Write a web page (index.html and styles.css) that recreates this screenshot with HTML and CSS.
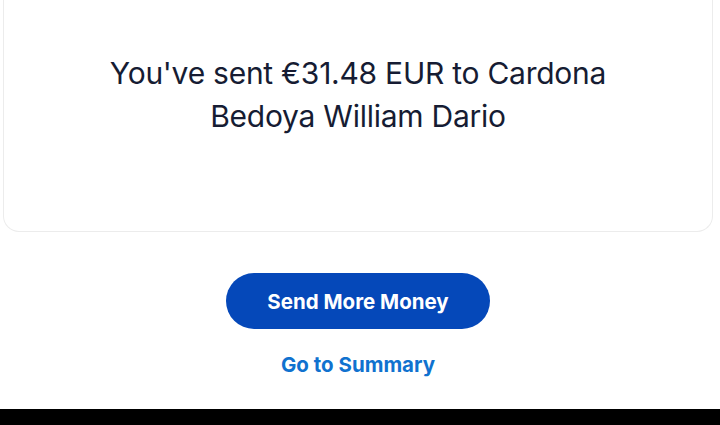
FILE: index.html
```html
<!DOCTYPE html>
<html lang="en">
<head>
    <meta charset="UTF-8">
    <meta name="viewport" content="width=device-width, initial-scale=1.0">
    <title>Payment sent</title>
    <link rel="stylesheet" href="styles.css">
</head>
<body>
    <div class="page">
        <div class="card">
            <h2 class="sent-msg">You've sent €31.48 EUR to Cardona Bedoya William Dario</h2>
        </div>
        <div class="actions">
            <a class="btn-primary" href="#">Send More Money</a>
            <a class="link" href="#">Go to Summary</a>
        </div>
    </div>
    <div class="bottom-bar"></div>
</body>
</html>
```

FILE: styles.css
```css
body {
    margin: 0;
    padding: 0;
    background-color: #fff;
    font-family: Inter, "Noto Sans", sans-serif;
    color: #161c33;
    height: 425px;
    display: flex;
    flex-direction: column;
    overflow: hidden;
}
.page {
    flex: 1;
}
.card {
    margin: 0 7px 0 3px;
    height: 232px;
    box-sizing: border-box;
    padding: 52px 80px 0 80px;
    background-color: #fff;
    border: 1px solid #ececec;
    border-top: none;
    border-radius: 0 0 16px 16px;
}
.sent-msg {
    margin: 0;
    text-align: center;
    font-weight: 400;
    font-size: 30px;
    line-height: 43px;
    letter-spacing: -0.25px;
}
.actions {
    display: flex;
    flex-direction: column;
    align-items: center;
    padding: 41px 4px 0 0;
}
.btn-primary {
    display: flex;
    align-items: center;
    justify-content: center;
    width: 264px;
    height: 56px;
    border-radius: 28px;
    background-color: #0548b9;
    color: #fff;
    text-decoration: none;
    font-weight: 700;
    font-size: 20.5px;
    letter-spacing: 0;
}
.link {
    margin-top: 23px;
    color: #1072cf;
    text-decoration: none;
    font-weight: 700;
    font-size: 20.5px;
    letter-spacing: 0;
}
.bottom-bar {
    height: 16px;
    background-color: #000;
}
```
